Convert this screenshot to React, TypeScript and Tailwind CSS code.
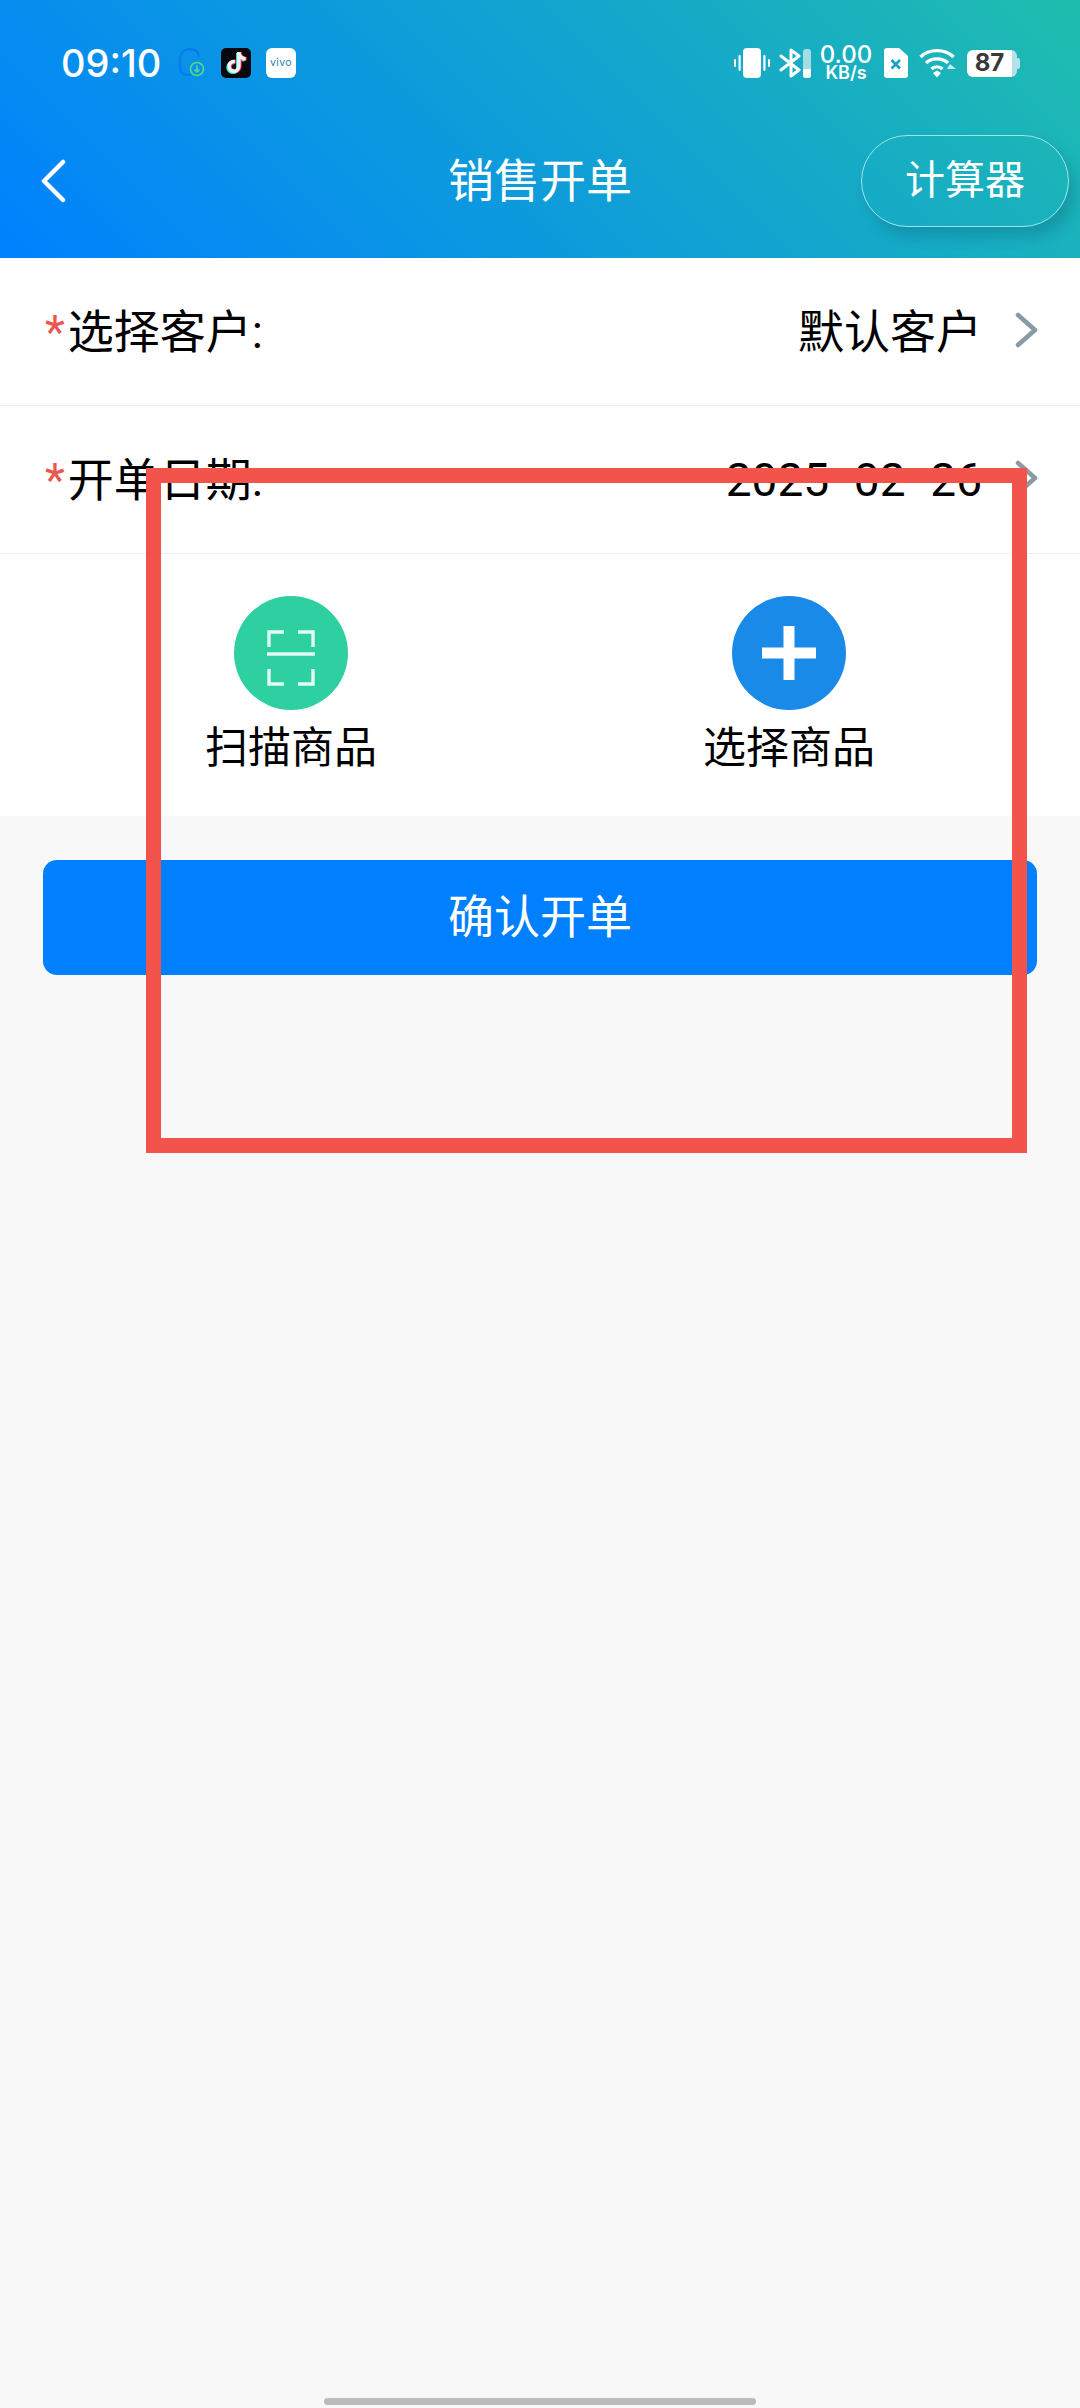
import type { ReactNode } from "react";
import { FaTiktok } from "react-icons/fa";

const FONT = `[font-family:Roboto,"Noto_Sans_CJK_SC",sans-serif]`;

function NotifyIcon() {
  return (
    <svg width="28" height="30" viewBox="0 0 28 30" fill="none">
      <path
        d="M3 24 C1 20 3 17 2 14 C1 6 6 1 12 1 C17 1 20 4 21 8"
        stroke="#0a78f0"
        strokeWidth="2"
        strokeLinecap="round"
      />
      <path d="M3 24 C6 27 9 27 12 27" stroke="#0a78f0" strokeWidth="2" strokeLinecap="round" />
      <circle cx="19" cy="21" r="6.5" stroke="#55d98a" strokeWidth="1.6" />
      <path d="M19 17.5 V24 M16.6 21.6 L19 24 L21.4 21.6" stroke="#55d98a" strokeWidth="1.5" />
    </svg>
  );
}

function TiktokIcon() {
  return (
    <div className="relative h-[30px] w-[30px] overflow-hidden rounded-[5px] bg-[#08090f]">
      <FaTiktok className="absolute left-[4px] top-[5px] text-[21px] text-[#25f4ee]" />
      <FaTiktok className="absolute left-[6px] top-[4px] text-[21px] text-[#fe2c55]" />
      <FaTiktok className="absolute left-[5px] top-[4px] text-[21px] text-[#f5f0ee]" />
    </div>
  );
}

function VivoIcon() {
  return (
    <div className="flex h-[30px] w-[30px] items-center justify-center rounded-[6px] bg-white">
      <span className="text-[10.5px] leading-none tracking-[0.4px] text-[#2f7fae] [font-family:Inter,sans-serif]">vivo</span>
    </div>
  );
}

function VibrateIcon() {
  return (
    <svg width="36" height="30" viewBox="0 0 36 30" fill="white">
      <rect x="9" y="0" width="18" height="30" rx="4" />
      <rect x="0" y="11" width="2" height="8" rx="1" />
      <rect x="4.5" y="7" width="2.2" height="16" rx="1.1" />
      <rect x="29.3" y="7" width="2.2" height="16" rx="1.1" />
      <rect x="34" y="11" width="2" height="8" rx="1" />
    </svg>
  );
}

function BluetoothIcon() {
  return (
    <svg width="33" height="30" viewBox="0 0 33 30" fill="none">
      <path
        d="M2 8 L20 22 L12 28 V2 L20 8 L2 22"
        stroke="white"
        strokeWidth="3"
        strokeLinejoin="round"
        strokeLinecap="round"
      />
      <rect x="24" y="1" width="8" height="29" rx="3" fill="#a5dde6" />
      <path d="M24 21 H32 V27 A3 3 0 0 1 29 30 H27 A3 3 0 0 1 24 27 Z" fill="white" />
    </svg>
  );
}

function SimIcon() {
  return (
    <svg width="24" height="30" viewBox="0 0 24 30">
      <path d="M3 0 H15 L24 8 V27 A3 3 0 0 1 21 30 H3 A3 3 0 0 1 0 27 V3 A3 3 0 0 1 3 0 Z" fill="white" />
      <path d="M7.5 12 L16 20.5 M16 12 L7.5 20.5" stroke="#14a3c6" strokeWidth="2.6" />
    </svg>
  );
}

function WifiIcon() {
  return (
    <svg width="37" height="30" viewBox="0 0 37 30" fill="none">
      <path d="M1.5 9 C10 0.5 26 0.5 34.5 9" stroke="white" strokeWidth="3.4" />
      <path d="M7 15 C12.5 9.5 23.5 9.5 29 15" stroke="white" strokeWidth="3.4" />
      <path d="M12.5 21 C15.5 18 20.5 18 23.5 21" stroke="white" strokeWidth="3.2" />
      <path d="M14 25 L18 22.5 L22 25 L18 29.5 Z" fill="white" />
      <path d="M31 16 L37 21 H28 Z" fill="#c9eef2" />
    </svg>
  );
}

function Battery() {
  return (
    <div className="flex items-center">
      <div className="flex h-[27px] w-[50px] items-center overflow-hidden rounded-[6px] bg-[#b5e2e6]">
        <div className="flex h-full w-[45px] items-center justify-center rounded-l-[6px] bg-white text-[24px] font-bold leading-none text-[#3a3a3a] [font-family:Inter,sans-serif]">
          87
        </div>
      </div>
      <div className="h-[11px] w-[3px] rounded-r-[2px] bg-[#b5e2e6]" />
    </div>
  );
}

function Chevron() {
  return (
    <svg className="mb-[4px]" width="24" height="38" viewBox="0 0 24 38" fill="none">
      <path d="M3 4 L20 19 L3 34" stroke="#8a9aa3" strokeWidth="4.5" strokeLinecap="round" strokeLinejoin="round" />
    </svg>
  );
}

function FormRow({ label, children }: { label: string; children: ReactNode }) {
  return (
    <div className="flex h-[148px] items-center border-b border-[#f0f0f0] pl-[45px] pr-[41px]">
      <span className="flex items-start text-[46px] leading-[60px] text-black">
        <span className="mr-[3px] text-[#e8584f]">*</span>
        {label}
      </span>
      <span className="ml-auto mr-[33px] text-[46px] leading-[60px] text-black">{children}</span>
      <Chevron />
    </div>
  );
}

function ActionItem({ label, children, color }: { label: string; children: ReactNode; color: string }) {
  return (
    <div className="flex flex-col items-center">
      <div className={`flex h-[114px] w-[114px] items-center justify-center rounded-full ${color}`}>{children}</div>
      <span className="mt-[13px] text-[43px] leading-[50px] text-black">{label}</span>
    </div>
  );
}

export default function App() {
  return (
    <div className={`relative flex min-h-[2408px] flex-col bg-[#f8f8f8] ${FONT}`}>
      <header className="h-[258px] bg-[linear-gradient(45deg,#0081ff,#1fbdae)]">
        <div className="flex h-[128px] items-center justify-between pb-[2px] pl-[61px] pr-[60px]">
          <div className="flex items-center">
            <span className="w-[117px] text-[38px] font-medium leading-none text-white [font-family:Inter,sans-serif]">09:10</span>
            <NotifyIcon />
            <div className="ml-[15px]">
              <TiktokIcon />
            </div>
            <div className="ml-[15px]">
              <VivoIcon />
            </div>
          </div>
          <div className="flex items-center">
            <VibrateIcon />
            <div className="ml-[9px]">
              <BluetoothIcon />
            </div>
            <div className="ml-[8px] flex w-[52px] flex-col items-center gap-[2px] whitespace-nowrap font-medium text-white [font-family:Inter,sans-serif]">
              <span className="text-[24px] leading-[18px]">0.00</span>
              <span className="text-[18px] font-semibold leading-[14px]">KB/s</span>
            </div>
            <div className="ml-[12px]">
              <SimIcon />
            </div>
            <div className="ml-[11px]">
              <WifiIcon />
            </div>
            <div className="ml-[11px]">
              <Battery />
            </div>
          </div>
        </div>

        <div className="grid h-[106px] grid-cols-[1fr_auto_1fr] items-center px-[11px]">
          <svg className="ml-[29px]" width="28" height="44" viewBox="0 0 28 44" fill="none">
            <path d="M23 3 L4 22 L23 41" stroke="white" strokeWidth="4.5" strokeLinecap="round" strokeLinejoin="round" />
          </svg>
          <h1 className="text-[46px] font-normal leading-none text-white">销售开单</h1>
          <button className="ml-auto flex h-[92px] w-[208px] items-center justify-center rounded-full border border-[#9fe3e8] text-[40px] text-white shadow-[6px_10px_14px_rgba(0,50,80,0.2)]">
            计算器
          </button>
        </div>
      </header>

      <main className="bg-white">
        <FormRow label="选择客户:">默认客户</FormRow>
        <FormRow label="开单日期:">
          2025<span className="mx-[6px] inline-block -translate-y-[4px]">-</span>02
          <span className="mx-[6px] inline-block -translate-y-[4px]">-</span>26
        </FormRow>
        <div className="grid h-[262px] grid-cols-2 px-[42px] pt-[42px]">
          <ActionItem label="扫描商品" color="bg-[#2ed0a2]">
            <svg className="mt-[10px]" width="48" height="56" viewBox="0 0 48 56" fill="none" stroke="#e4faf4" strokeWidth="3.4">
              <path d="M17 2 H2 V17" />
              <path d="M31 2 H46 V17" />
              <path d="M17 54 H2 V39" />
              <path d="M31 54 H46 V39" />
              <path d="M0 24 H48" />
            </svg>
          </ActionItem>
          <ActionItem label="选择商品" color="bg-[#1a8ae8]">
            <svg width="54" height="54" viewBox="0 0 54 54" fill="white">
              <rect x="21.5" y="0" width="11" height="54" />
              <rect x="0" y="21.5" width="54" height="11" />
            </svg>
          </ActionItem>
        </div>
      </main>

      <div className="px-[43px] pt-[44px]">
        <button className="flex h-[115px] w-full items-center justify-center rounded-[14px] bg-[#0080ff] text-[46px] text-white">
          确认开单
        </button>
      </div>

      <div className="mt-auto mb-[3px] h-[7px] w-[432px] self-center rounded-full bg-[#bbbbbb]" />

      {/* red annotation box drawn on top of the screenshot */}
      <div className="absolute left-[146px] top-[468px] h-[685px] w-[881px] border-[15px] border-[#f2544c]" />
    </div>
  );
}
